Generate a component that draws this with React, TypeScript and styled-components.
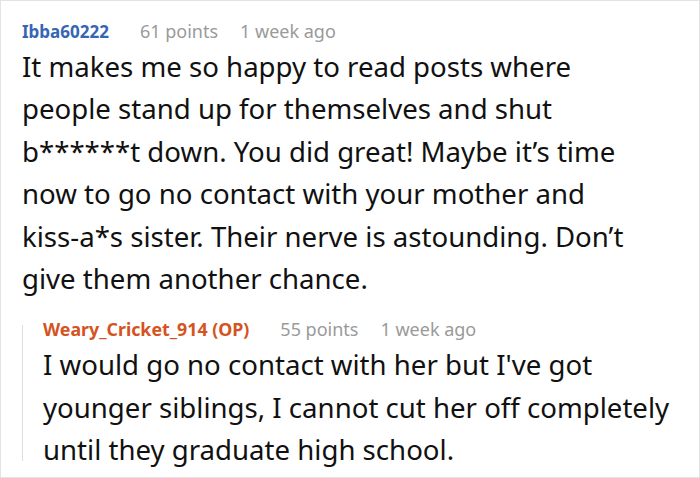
import React from 'react';
import styled, {createGlobalStyle} from 'styled-components';

const GlobalStyle = createGlobalStyle`
  html, body {
    margin: 0;
    padding: 0;
    background: #ffffff;
  }
  body {
    font-family: "Noto Sans", "Open Sans", sans-serif;
  }
`;

const Card = styled.div`
  box-sizing: border-box;
  width: 700px;
  height: 478px;
  border: 1px solid #e3e3e3;
  padding: 18px 24px 0 21px;
  overflow: hidden;
`;

const Meta = styled.div`
  display: flex;
  align-items: baseline;
  gap: 22px;
  height: 24px;
  line-height: 24px;
`;

const Author = styled.span<{$op?: boolean}>`
  margin-right: 9px;
  font-size: ${({$op}) => ($op ? 17.8 : 17)}px;
  font-weight: 700;
  color: ${({$op}) => ($op ? '#d4531f' : '#3566b4')};
`;

const Info = styled.span`
  font-size: 18px;
  color: #9a9a9a;
`;

const Body = styled.p<{$inset?: number}>`
  margin: 2px ${({$inset}) => $inset ?? 0}px 0 0;
  font-size: 27.6px;
  line-height: 42.4px;
  color: #111111;
`;

const Reply = styled.div`
  position: relative;
  margin-top: 18px;
  padding-left: 21px;

  &::before {
    content: "";
    position: absolute;
    left: 0;
    top: 8px;
    bottom: 10px;
    width: 1px;
    background: #dddddd;
  }
`;

interface IComment {
  author: string;
  op?: boolean;
  points: number;
  age: string;
  text: string;
}

const comment: IComment = {
  author: 'Ibba60222',
  points: 61,
  age: '1 week ago',
  text: 'It makes me so happy to read posts where people stand up for themselves and shut b******t down. You did great! Maybe it’s time now to go no contact with your mother and kiss-a*s sister. Their nerve is astounding. Don’t give them another chance.',
};

const reply: IComment = {
  author: 'Weary_Cricket_914 (OP)',
  op: true,
  points: 55,
  age: '1 week ago',
  text: "I would go no contact with her but I've got younger siblings, I cannot cut her off completely until they graduate high school.",
};

function CommentMeta({author, op, points, age}: IComment) {
  return (
    <Meta>
      <Author $op={op}>{author}</Author>
      <Info>{points} points</Info>
      <Info>{age}</Info>
    </Meta>
  );
}

export default function App() {
  return (
    <>
      <GlobalStyle/>
      <Card>
        <CommentMeta {...comment}/>
        <Body $inset={26}>{comment.text}</Body>
        <Reply>
          <CommentMeta {...reply}/>
          <Body>{reply.text}</Body>
        </Reply>
      </Card>
    </>
  );
}
